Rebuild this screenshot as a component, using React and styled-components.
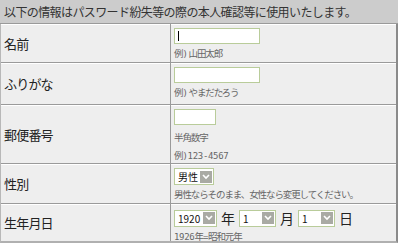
import React from "react";
import styled, { createGlobalStyle } from "styled-components";

const Global = createGlobalStyle`
  html, body { margin: 0; padding: 0; background: #ffffff; }
  body { font-family: "Noto Sans CJK JP", "Noto Sans", sans-serif; color: #333; }
`;

const Wrap = styled.div`
  width: 398px;
  background: #eeeeee;
`;

const Header = styled.div`
  height: 24px;
  box-sizing: border-box;
  background: #cccccc;
  border-bottom: 1px solid #9a9a9a;
  padding-left: 4px;
  display: flex;
  align-items: center;
  font-size: 12px;
  letter-spacing: -0.6px;
  color: #333;
  white-space: nowrap;
`;

const Table = styled.div`
  display: grid;
  grid-template-columns: 169px 1fr;
  gap: 1px;
  background: #9a9a9a;
  border-left: 1px solid #b8b8b8;
  border-right: 2px solid #8a8a8a;
  border-bottom: 2px solid #b0b0b0;
`;

const Label = styled.div`
  background: #eeeeee;
  height: ${(p) => p.$h}px;
  display: flex;
  align-items: center;
  padding-left: 3px;
  font-size: 13px;
  letter-spacing: -0.8px;
  color: #222;
  box-shadow: inset 0 1px 0 #ffffff;
`;

const Cell = styled.div`
  background: #eeeeee;
  height: ${(p) => p.$h}px;
  padding: 4px 0 0 3px;
  box-sizing: border-box;
  display: flex;
  flex-direction: column;
  gap: ${(p) => p.$gap || 3}px;
  box-shadow: inset 0 1px 0 #ffffff;
`;

const TextInput = styled.div`
  width: ${(p) => p.$w}px;
  height: 16px;
  box-sizing: border-box;
  background: #fff;
  border: 1px solid #b9cc9a;
  position: relative;
`;

const Caret = styled.span`
  position: absolute;
  left: 3px;
  top: 2px;
  width: 1px;
  height: 10px;
  background: #000;
`;

const Note = styled.div`
  font-size: 9.5px;
  letter-spacing: -1.1px;
  color: #666;
  line-height: 12px;
  white-space: nowrap;
`;

const Latin = styled.span`
  font-family: "DejaVu Sans Mono", "Liberation Mono", monospace;
  font-size: 9px;
  letter-spacing: -0.3px;
  padding-right: ${(p) => p.$pr || 0}px;
`;

const Line = styled.div`
  display: flex;
  align-items: center;
  gap: 3px;
`;

const Select = styled.div`
  width: ${(p) => p.$w}px;
  height: 17px;
  box-sizing: border-box;
  background: #fff;
  border: 1px solid #b9cc9a;
  display: flex;
  align-items: center;
  justify-content: space-between;
  padding: 0 1px 0 3px;
  font-size: 10px;
  color: #111;
`;

const Arrow = styled.span`
  width: 12px;
  height: 12px;
  background: #a9aaa4;
  display: flex;
  align-items: center;
  justify-content: center;
`;

const Unit = styled.span`
  font-size: 14px;
  color: #222;
  padding: 0 1px;
`;

const ArrowBox = () => (
  <Arrow>
    <svg width="8" height="6" viewBox="0 0 8 6">
      <path d="M1 1 L4 4 L7 1" fill="none" stroke="#fff" strokeWidth="1.6" />
    </svg>
  </Arrow>
);

const Dropdown = ({ w, value }) => (
  <Select $w={w}>
    <span>{value}</span>
    <ArrowBox />
  </Select>
);

export default function App() {
  return (
    <>
      <Global />
      <Wrap>
        <Header>以下の情報はパスワード紛失等の際の本人確認等に使用いたします。</Header>
        <Table>
          <Label $h={38}>名前</Label>
          <Cell $h={38}>
            <TextInput $w={86}><Caret /></TextInput>
            <Note>例<Latin $pr={1}>)</Latin>山田太郎</Note>
          </Cell>
          <Label $h={41}>ふりがな</Label>
          <Cell $h={41}>
            <TextInput $w={86} />
            <Note>例<Latin $pr={1}>)</Latin>やまだたろう</Note>
          </Cell>
          <Label $h={58}>郵便番号</Label>
          <Cell $h={58} $gap={6}>
            <TextInput $w={42} />
            <Note>半角数字</Note>
            <Note>例<Latin>)123-4567</Latin></Note>
          </Cell>
          <Label $h={39}>性別</Label>
          <Cell $h={39}>
            <Line>
              <Dropdown w={40} value="男性" />
            </Line>
            <Note>男性ならそのまま、女性なら変更してください。</Note>
          </Cell>
          <Label $h={37}>生年月日</Label>
          <Cell $h={37} $gap={2}>
            <Line>
              <Dropdown w={43} value="1920" />
              <Unit>年</Unit>
              <Dropdown w={37} value="1" />
              <Unit>月</Unit>
              <Dropdown w={37} value="1" />
              <Unit>日</Unit>
            </Line>
            <Note><Latin>1926</Latin>年<Latin>=</Latin>昭和元年</Note>
          </Cell>
        </Table>
      </Wrap>
    </>
  );
}
